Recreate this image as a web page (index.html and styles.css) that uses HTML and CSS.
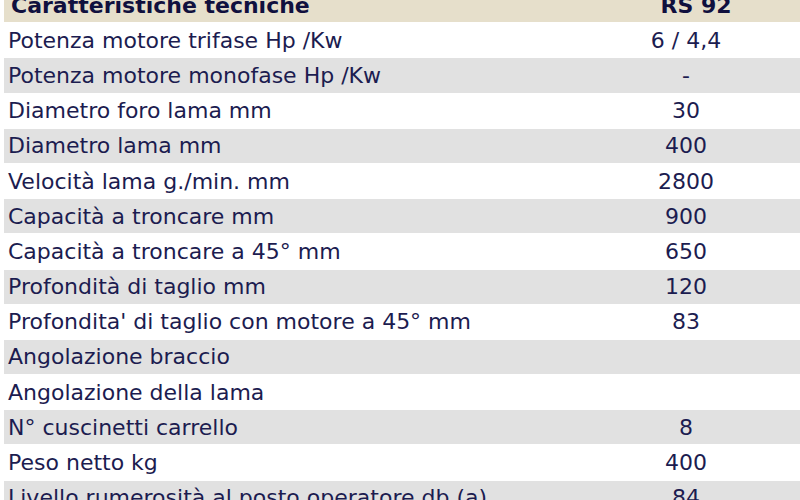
FILE: index.html
```html
<!DOCTYPE html>
<html lang="it">
<head>
<meta charset="utf-8">
<link rel="stylesheet" href="styles.css">
</head>
<body>
<div class="page">
<table class="specs">
  <thead>
    <tr class="head"><th class="label-h">Caratteristiche tecniche</th><th class="value-h">RS 92</th></tr>
  </thead>
  <tbody>
    <tr><td class="label">Potenza motore trifase Hp /Kw</td><td class="value">6 / 4,4</td></tr>
    <tr class="alt"><td class="label">Potenza motore monofase Hp /Kw</td><td class="value">-</td></tr>
    <tr><td class="label">Diametro foro lama mm</td><td class="value">30</td></tr>
    <tr class="alt"><td class="label">Diametro lama mm</td><td class="value">400</td></tr>
    <tr><td class="label">Velocità lama g./min. mm</td><td class="value">2800</td></tr>
    <tr class="alt"><td class="label">Capacità a troncare mm</td><td class="value">900</td></tr>
    <tr><td class="label">Capacità a troncare a 45° mm</td><td class="value">650</td></tr>
    <tr class="alt"><td class="label">Profondità di taglio mm</td><td class="value">120</td></tr>
    <tr><td class="label">Profondita' di taglio con motore a 45° mm</td><td class="value">83</td></tr>
    <tr class="alt"><td class="label">Angolazione braccio</td><td class="value"></td></tr>
    <tr><td class="label">Angolazione della lama</td><td class="value"></td></tr>
    <tr class="alt"><td class="label">N° cuscinetti carrello</td><td class="value">8</td></tr>
    <tr><td class="label">Peso netto kg</td><td class="value">400</td></tr>
    <tr class="alt"><td class="label">Livello rumerosità al posto operatore db (a)</td><td class="value">84</td></tr>
  </tbody>
</table>
</div>
</body>
</html>
```
FILE: styles.css
```css
html, body {
  margin: 0;
  padding: 0;
  background: #ffffff;
  overflow: hidden;
}
.page {
  padding: 0 0 0 4px;
  margin-top: -13px;
}
.specs {
  width: 796px;
  border-collapse: separate;
  border-spacing: 0 1px;
  font-family: "DejaVu Sans", Verdana, sans-serif;
  font-size: 22px;
  color: #1c1c50;
  table-layout: fixed;
}
.specs th,
.specs td {
  height: 34.2px;
  padding: 0;
  vertical-align: middle;
  white-space: nowrap;
}
.specs .head th {
  background: #e6dfcb;
  color: #10103e;
  font-weight: bold;
}
.specs .label-h {
  text-align: left;
  padding-left: 7px;
  width: 561px;
}
.specs .value-h {
  text-align: center;
  padding-left: 20px;
}
.specs .label {
  text-align: left;
  padding-left: 4px;
}
.specs .value {
  text-align: center;
}
.specs .alt td {
  background: #e1e1e1;
}
```
